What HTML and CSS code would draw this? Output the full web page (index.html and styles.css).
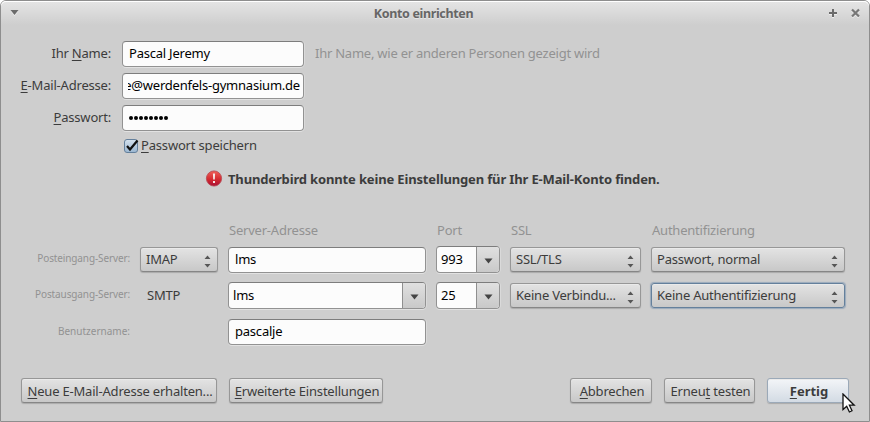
FILE: index.html
```html
<!DOCTYPE html>
<html lang="de">
<head>
<meta charset="utf-8">
<title>Konto einrichten</title>
<link rel="stylesheet" href="styles.css">
</head>
<body>
<svg class="defs" width="0" height="0">
  <defs>
    <symbol id="updown" viewBox="0 0 7 13"><path d="M0.5 4 L3.5 0.5 L6.5 4Z M0.5 9 L3.5 12.5 L6.5 9Z"/></symbol>
    <symbol id="down" viewBox="0 0 9 6"><path d="M0.5 0.5H8.5L4.5 5.5Z"/></symbol>
  </defs>
</svg>
<main class="window">
  <header class="titlebar">
    <svg class="menu" width="9" height="6"><path class="shine" d="M0.5 1H8.5L4.5 6Z"/><path d="M0.5 0H8.5L4.5 5Z"/></svg>
    <h1 class="title">Konto einrichten</h1>
    <svg class="plus" width="9" height="10"><path class="shine" d="M3 2H5V10H3Z M0 5H8V7H0Z"/><path d="M3 1H5V9H3Z M0 4H8V6H0Z"/></svg>
    <svg class="close" width="9" height="10"><path class="cross-shine" d="M1 2.5L8 9.5M8 2.5L1 9.5"/><path class="cross" d="M1 1.5L8 8.5M8 1.5L1 8.5"/></svg>
  </header>

  <section class="account">
    <label>Ihr <u>N</u>ame:</label>
    <div class="field"><span>Pascal Jeremy</span></div>
    <p class="hint">Ihr Name, wie er anderen Personen gezeigt wird</p>
    <label><u>E</u>-Mail-Adresse:</label>
    <div class="field mail"><div class="clip"><span>e@werdenfels-gymnasium.de</span></div></div>
    <i></i>
    <label><u>P</u>asswort:</label>
    <div class="field password"><b></b><b></b><b></b><b></b><b></b><b></b><b></b><b></b></div>
    <i></i>
  </section>

  <div class="remember">
    <div class="checkbox"><svg width="14" height="14"><path d="M3 7L6 10.5L13.5 1.5"/></svg></div>
    <span><u>P</u>asswort speichern</span>
  </div>

  <div class="error">
    <svg width="18" height="18">
      <defs><linearGradient id="red" x2="0" y2="1"><stop offset="0" stop-color="#ef6057"/><stop offset=".55" stop-color="#d42a30"/><stop offset="1" stop-color="#a90f35"/></linearGradient></defs>
      <circle cx="9" cy="8.5" r="7.6" fill="url(#red)" stroke="#b4454f" stroke-width=".8"/>
      <path d="M7.9 3.5H10.1L9.8 9.5H8.2Z M8 11H10V13H8Z" fill="#f5e8e6"/>
    </svg>
    <span>Thunderbird konnte keine Einstellungen für Ihr E-Mail-Konto finden.</span>
  </div>

  <section class="servers">
    <div class="heads">
      <i></i><i></i>
      <span>Server-Adresse</span><span>Port</span><span>SSL</span><span>Authentifizierung</span>
    </div>
    <div class="row">
      <span class="name">Posteingang-Server:</span>
      <div class="button select"><span>IMAP</span><svg><use href="#updown"/></svg></div>
      <div class="field"><span>lms</span></div>
      <div class="field combo"><span>993</span><div class="drop"><svg><use href="#down"/></svg></div></div>
      <div class="button select"><span>SSL/TLS</span><svg><use href="#updown"/></svg></div>
      <div class="button select"><span>Passwort, normal</span><svg><use href="#updown"/></svg></div>
    </div>
    <div class="row">
      <span class="name">Postausgang-Server:</span>
      <span class="smtp">SMTP</span>
      <div class="field combo"><span>lms</span><div class="drop"><svg><use href="#down"/></svg></div></div>
      <div class="field combo"><span>25</span><div class="drop"><svg><use href="#down"/></svg></div></div>
      <div class="button select"><span>Keine Verbindu...</span><svg><use href="#updown"/></svg></div>
      <div class="button select focused"><span>Keine Authentifizierung</span><svg><use href="#updown"/></svg></div>
    </div>
    <div class="row">
      <span class="name user">Benutzername:</span>
      <i></i>
      <div class="field"><span>pascalje</span></div>
    </div>
  </section>

  <footer class="actions">
    <div class="button new-mail"><span><u>N</u>eue E-Mail-Adresse erhalten...</span></div>
    <div class="button advanced"><span><u>E</u>rweiterte Einstellungen</span></div>
    <div class="button cancel"><span><u>A</u>bbrechen</span></div>
    <div class="button retest"><span>Erneu<u>t</u> testen</span></div>
    <div class="button done"><span><u>F</u>ertig</span></div>
  </footer>
</main>
<svg class="pointer" width="14" height="21"><path d="M1 1V16.5L4.7 13.2L7.4 19L10 17.8L7.4 12.2H12.2Z"/></svg>
</body>
</html>
```
FILE: styles.css
```css
* { box-sizing: border-box; }
body {
  margin: 0;
  width: 870px;
  height: 422px;
  overflow: hidden;
  background: #fff;
  font: 13px/18px "Noto Sans", "Open Sans", sans-serif;
  letter-spacing: -0.22px;
  color: #3c3c3c;
  white-space: nowrap;
}
.defs { position: absolute; }
.window {
  height: 422px;
  border: 1px solid #8e8e8e;
  border-radius: 6px 6px 0 0;
  background: #cecece;
}
.titlebar {
  display: flex;
  align-items: center;
  height: 24px;
  padding: 0 9px;
  border-radius: 5px 5px 0 0;
  background: linear-gradient(#e5e5e5, #cecece);
  box-shadow: inset 0 1px #fff;
}
.titlebar svg { fill: #6b6b6b; }
.titlebar .shine { fill: #eee; }
.menu { margin-right: 28px; }
.plus { margin-right: 13px; }
.titlebar .cross, .titlebar .cross-shine { fill: none; stroke: #777; stroke-width: 2.2; }
.titlebar .cross-shine { stroke: #eee; }
.title {
  flex: 1;
  margin: 0;
  padding: 2px 29px 0 0;
  font-size: 12.5px;
  letter-spacing: -0.34px;
  text-align: center;
  color: #666;
  text-shadow: 0 1px #e6e6e6;
}
u { text-underline-offset: 2px; text-decoration-thickness: 1px; }

.account {
  display: grid;
  grid-template-columns: 110px 182px 1fr;
  grid-auto-rows: 26px;
  column-gap: 11px;
  row-gap: 6px;
  padding-top: 16px;
}
.account label { text-align: right; line-height: 25px; letter-spacing: -0.2px; }
.hint { margin: 0; line-height: 25px; letter-spacing: -0.24px; color: #929292; }
.field {
  display: flex;
  align-items: center;
  height: 26px;
  padding: 0 7px 2px 6px;
  border: 1px solid #929292;
  border-top-color: #7d7d7d;
  border-radius: 4px;
  background: #fcfcfc;
  box-shadow: 0 1px #e2e2e2, 1px 0 #dadada;
  color: #000;
}
.mail { padding: 0 3px 2px 5px; }
.clip { display: flex; flex: 1; justify-content: flex-end; overflow: hidden; }
.password { gap: 1px; padding-bottom: 1px; }
.password b { width: 4px; height: 4px; border-radius: 2px; background: #000; }

.remember { display: flex; align-items: center; height: 18px; margin: 6px 0 0 123px; gap: 3px; }
.remember span { padding-bottom: 2px; letter-spacing: -0.18px; }
.checkbox {
  width: 14px;
  height: 14px;
  border: 1px solid #64809c;
  border-radius: 3px;
  background: linear-gradient(#d3e0ec, #9cb7d1);
}
.checkbox svg { display: block; margin: -1px; overflow: visible; fill: none; stroke: #111; stroke-width: 2.2; }

.error {
  display: flex;
  align-items: center;
  gap: 5px;
  height: 18px;
  margin: 15px 0 0 204px;
  font-weight: bold;
  letter-spacing: -0.15px;
}

.servers { margin-top: 33px; padding-left: 20px; }
.heads, .row {
  display: grid;
  grid-template-columns: 109px 78px 198px 64px 131px 194px;
  column-gap: 10px;
  align-items: center;
}
.heads { height: 20px; color: #929292; }
.heads span { padding: 0 0 2px 1px; }
.row { height: 27px; margin-bottom: 9px; }
.row:nth-child(2) { margin-top: 5px; }
.name { padding-bottom: 3px; font-size: 10px; letter-spacing: -0.12px; text-align: right; color: #929292; }
.user { padding-bottom: 1px; letter-spacing: 0; }
.smtp { padding: 0 0 2px 7px; }
.combo { height: 27px; padding: 0 0 0 4px; justify-content: space-between; }
.combo > span { padding-bottom: 1px; }
.drop {
  display: grid;
  place-items: center;
  width: 23px;
  height: 25px;
  border-left: 1px solid #8f8f8f;
  border-radius: 0 3px 3px 0;
  background: linear-gradient(#e0e0e0, #c9c9c9);
}
.drop svg { width: 9px; height: 6px; fill: #444; margin-top: 2px; }

.button {
  display: flex;
  align-items: center;
  justify-content: center;
  height: 25px;
  border: 1px solid #979797;
  border-bottom-color: #868686;
  border-radius: 3px;
  background: linear-gradient(#e3e3e3, #c8c8c8);
  box-shadow: inset 0 1px #eaeaea, 0 1px 1px #aaa;
}
.button:not(.select) { padding-left: 2px; letter-spacing: -0.2px; }
.select { justify-content: space-between; padding: 0 6px 0 5px; }
.select span { padding-bottom: 2px; }
.select svg { width: 7px; height: 13px; margin-top: 3px; fill: #565656; }
.focused { border-color: #64809c; box-shadow: inset 0 1px #eaeaea, 0 0 1px 1px #9aaabc; }

.actions { display: flex; margin: 33px 0 0 20px; }
.new-mail { width: 196px; margin-right: 12px; }
.advanced { width: 154px; margin-right: 187px; }
.cancel { width: 82px; margin-right: 12px; }
.retest { width: 91px; margin-right: 12px; }
.button.done {
  width: 82px;
  border-color: #9ba9b8;
  background: linear-gradient(#f3f5f8, #d3dbe4);
  font-weight: bold;
  letter-spacing: 0;
}
.pointer { position: absolute; left: 842px; top: 393px; fill: #fff; stroke: #111; stroke-width: 1.3; }
```
